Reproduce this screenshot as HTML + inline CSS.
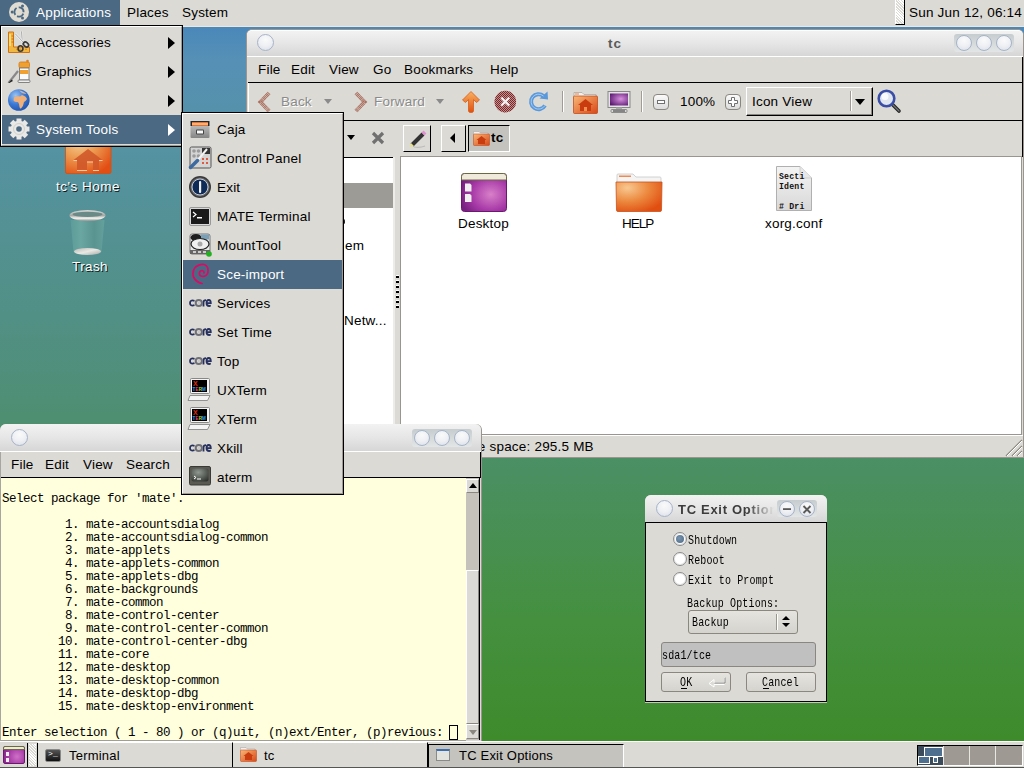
<!DOCTYPE html>
<html><head><meta charset="utf-8">
<style>
*{margin:0;padding:0;box-sizing:border-box}
html,body{width:1024px;height:768px;overflow:hidden}
body{position:relative;font-family:"Liberation Sans",sans-serif;font-size:13.5px;letter-spacing:0.2px;color:#000;
background:linear-gradient(to bottom,#4a88ba 27px,#5690b6 60px,#5592a2 150px,#4f8f76 400px,#4a8f62 470px,#44903f 620px,#3e8b2c 740px,#3e8b2c 768px)}
.a{position:absolute}
.t{position:absolute;white-space:nowrap;line-height:1}
.bg{background:#dcdad5}
.dlgt{font-family:"Liberation Mono",monospace;font-size:13.5px;transform:scaleX(0.741);transform-origin:0 0;color:#000}
.mono{font-family:"Liberation Mono",monospace}
/* window frame */
.tb{background:linear-gradient(to bottom,#f2f2f2 0%,#e6e6e6 50%,#d6d6d6 100%)}
.circ{position:absolute;width:16px;height:16px;border-radius:50%;border:1.5px solid #a7b4c8;
background:radial-gradient(circle at 50% 30%,#fafafa 0%,#eef0f4 50%,#d9dde6 100%)}
.circ.big{width:17px;height:17px}
.grp{position:absolute;background:linear-gradient(to bottom,#c6cdcf,#e3e6e6);border-radius:3px}
</style></head><body>

<!-- ========== TOP PANEL ========== -->
<div class="a bg" style="left:0;top:0;width:1024px;height:27px;border-bottom:1px solid #ebe7df"></div>
<div class="a" style="left:0;top:0;width:120px;height:25px;background:#4b6983"></div>
<svg class="a" style="left:8px;top:1px" width="22" height="22" viewBox="0 0 22 22">
<circle cx="11" cy="11" r="10" fill="#e0dcd2"/>
<circle cx="11" cy="11" r="4.6" fill="none" stroke="#4b6983" stroke-width="1.8" stroke-dasharray="7.5 2.1" transform="rotate(20 11 11)"/>
<circle cx="14.5" cy="5" r="1.5" fill="#4b6983"/><circle cx="4.2" cy="11" r="1.5" fill="#4b6983"/><circle cx="14.5" cy="17" r="1.5" fill="#4b6983"/>
</svg>
<div class="t" style="left:36px;top:6px;color:#fff">Applications</div>
<div class="t" style="left:127px;top:6px">Places</div>
<div class="t" style="left:182px;top:6px">System</div>
<div class="a" style="left:895px;top:0;width:10px;height:25px;border-right:1px solid #000;border-bottom:1px solid #000;border-left:1px solid #fff;background:repeating-linear-gradient(45deg,#dcdad5 0 1px,#fff 1px 2px)"></div>
<div class="t" style="left:909px;top:6px">Sun Jun 12, 06:14</div>



<!-- ========== DESKTOP ICONS ========== -->
<svg class="a" style="left:64px;top:130px" width="48" height="46" viewBox="0 0 48 46">
<defs><radialGradient id="hg" cx="0.3" cy="0.25" r="0.85"><stop offset="0" stop-color="#f4cc90"/><stop offset="0.45" stop-color="#ec9a50"/><stop offset="1" stop-color="#e24e14"/></radialGradient></defs>
<rect x="1.5" y="2" width="45.5" height="41.5" rx="1.5" fill="url(#hg)" stroke="#d05010" stroke-width="0.8"/>
<path d="M24 19 L38.5 30 H35 V40 H29 V31.5 H23 V40 H13 V30 H9.5 Z" fill="#d0582a" opacity="0.9"/>
<path d="M9.5 30.5 H13 M35 30.5 H38.5 M13 40.5 H23 M29 40.5 H35 M23 32 H29" stroke="#f8c8a0" stroke-width="1"/>
</svg>
<div class="t" style="left:56px;top:180px;letter-spacing:0.5px;color:#fff;text-shadow:1px 1px 0 rgba(0,0,0,0.85)">tc's Home</div>
<svg class="a" style="left:66px;top:207px" width="44" height="50" viewBox="0 0 44 50">
<defs><linearGradient id="tg" x1="0" y1="0" x2="1" y2="0"><stop offset="0" stop-color="#5c9c98"/><stop offset="0.3" stop-color="#6aa6a2"/><stop offset="0.7" stop-color="#5a9490"/><stop offset="1" stop-color="#64a09c"/></linearGradient>
<linearGradient id="rim" x1="0" y1="0" x2="0" y2="1"><stop offset="0" stop-color="#d8d8d4"/><stop offset="0.5" stop-color="#a8a8a4"/><stop offset="0.75" stop-color="#f4f4f0"/><stop offset="1" stop-color="#909090"/></linearGradient>
<linearGradient id="bt" x1="0" y1="0" x2="1" y2="1"><stop offset="0" stop-color="#b8b8b4"/><stop offset="0.5" stop-color="#e8e8e4"/><stop offset="1" stop-color="#a8a8a4"/></linearGradient></defs>
<path d="M4.5 13 L7.5 45 H35.5 L38.5 13 Z" fill="url(#tg)"/>
<ellipse cx="21.5" cy="44.5" rx="13.5" ry="3.5" fill="url(#bt)"/>
<ellipse cx="21.5" cy="8.5" rx="18" ry="5.5" fill="url(#rim)"/>
<ellipse cx="21.5" cy="7.3" rx="15" ry="2.6" fill="#6a8a88"/>
</svg>
<div class="t" style="left:72px;top:260px;letter-spacing:0.4px;color:#fff;text-shadow:1px 1px 0 rgba(0,0,0,0.85)">Trash</div>

<!-- ========== FILE MANAGER WINDOW ========== -->
<div class="a" style="left:246px;top:29px;width:778px;height:429px;background:#dcdad5;border-radius:6px 6px 0 0;border:1px solid #9a958e"></div>
<div class="a tb" style="left:247px;top:30px;width:776px;height:26px;border-radius:5px 5px 0 0;border-top:1px solid #fff"></div>
<div class="a" style="left:247px;top:56px;width:776px;height:1px;background:#fff"></div>
<div class="circ big" style="left:257px;top:34px"></div>
<div class="t" style="left:608px;top:37px;font-weight:bold;color:#5a5a5a;font-size:13.5px;letter-spacing:1px">tc</div>
<div class="grp" style="left:954px;top:34px;width:60px;height:18px"></div>
<div class="circ" style="left:956px;top:35px"></div>
<div class="circ" style="left:976px;top:35px"></div>
<div class="circ" style="left:996px;top:35px"></div>
<!-- menubar -->
<div class="a" style="left:248px;top:57px;width:775px;height:26px;background:#dcdad5;border-bottom:1px solid #000;border-right:1px solid #000"></div>
<div class="t" style="left:258px;top:63px">File</div>
<div class="t" style="left:291px;top:63px">Edit</div>
<div class="t" style="left:329px;top:63px">View</div>
<div class="t" style="left:373px;top:63px">Go</div>
<div class="t" style="left:404px;top:63px">Bookmarks</div>
<div class="t" style="left:490px;top:63px">Help</div>
<!-- toolbar -->
<div class="a" style="left:248px;top:83px;width:775px;height:38px;background:#dcdad5;border-bottom:1px solid #000;border-right:1px solid #000;border-left:1px solid #fff"></div>

<!-- back -->
<svg class="a" style="left:257px;top:91px" width="15" height="22" viewBox="0 0 15 22">
<path d="M12 2 L3.5 11 L12 20" fill="none" stroke="#a05a48" stroke-width="4" stroke-dasharray="1 0.5" opacity="0.85"/>
</svg>
<div class="t" style="left:281px;top:95px;color:#8a8a8a;text-shadow:1px 1px 0 #fff">Back</div>
<div class="a" style="left:324px;top:99px;border-left:4.5px solid transparent;border-right:4.5px solid transparent;border-top:5px solid #8a8a8a"></div>
<svg class="a" style="left:353px;top:91px" width="15" height="22" viewBox="0 0 15 22">
<path d="M3 2 L11.5 11 L3 20" fill="none" stroke="#a05a48" stroke-width="4" stroke-dasharray="1 0.5" opacity="0.85"/>
</svg>
<div class="t" style="left:374px;top:95px;color:#8a8a8a;text-shadow:1px 1px 0 #fff">Forward</div>
<div class="a" style="left:436px;top:99px;border-left:4.5px solid transparent;border-right:4.5px solid transparent;border-top:5px solid #8a8a8a"></div>
<!-- up -->
<svg class="a" style="left:461px;top:90px" width="20" height="24" viewBox="0 0 20 24">
<defs><linearGradient id="up" x1="0" y1="0" x2="0" y2="1"><stop offset="0" stop-color="#f8b060"/><stop offset="1" stop-color="#e05010"/></linearGradient></defs>
<path d="M10 1.5 L18.5 10 L15.5 12.5 L12.5 9.5 V21 Q12.5 22.5 10 22.5 Q7.5 22.5 7.5 21 V9.5 L4.5 12.5 L1.5 10 Z" fill="url(#up)" stroke="#d85a18" stroke-width="0.8" stroke-linejoin="round"/>
</svg>
<!-- stop -->
<svg class="a" style="left:494px;top:90px" width="23" height="24" viewBox="0 0 23 24">
<defs><pattern id="dith" width="2" height="2" patternUnits="userSpaceOnUse"><rect width="2" height="2" fill="#d8c8c4"/><rect width="1" height="1" fill="#7a1e22"/><rect x="1" y="1" width="1" height="1" fill="#7a1e22"/></pattern></defs>
<circle cx="11.3" cy="11.6" r="10.8" fill="url(#dith)"/>
<circle cx="11.3" cy="11.6" r="10.8" fill="#8a3030" opacity="0.35"/>
<path d="M7.3 7.6 L15.3 15.6 M15.3 7.6 L7.3 15.6" stroke="#f0f0f0" stroke-width="2.2"/>
</svg>
<!-- reload -->
<svg class="a" style="left:528px;top:90px" width="22" height="24" viewBox="0 0 22 24">
<path d="M17 15.5 A7.5 7.5 0 1 1 15.5 6" fill="none" stroke="#5a98dc" stroke-width="4"/>
<path d="M11.5 8.5 L20 9.5 L19.5 1.5 Z" fill="#5a98dc"/>
<path d="M17 15.5 A7.5 7.5 0 1 1 15.5 6" fill="none" stroke="#a8ccf0" stroke-width="1"/>
</svg>
<!-- separator -->
<div class="a" style="left:562px;top:91px;width:2px;height:21px;border-left:1px solid #a09c94;border-right:1px solid #fff"></div>
<!-- home -->
<svg class="a" style="left:573px;top:91px" width="25" height="23" viewBox="0 0 25 23">
<defs><linearGradient id="hf" x1="0" y1="0" x2="1" y2="1"><stop offset="0" stop-color="#f8b878"/><stop offset="1" stop-color="#d84818"/></linearGradient></defs>
<path d="M1 1.5 H9 L11 3.5 H23 V8 H1 Z" fill="#f4f0ec" stroke="#aaa" stroke-width="0.8"/>
<rect x="2" y="2.5" width="4" height="1" fill="#f08040"/>
<rect x="0.5" y="5" width="24" height="17.5" rx="1" fill="url(#hf)" stroke="#c04010" stroke-width="0.7"/>
<path d="M12.5 8 L20 14 H18 V20 H7 V14 H5 Z" fill="#c83c10"/>
<rect x="11" y="16" width="3" height="4" fill="#f09050"/>
</svg>
<!-- computer -->
<svg class="a" style="left:607px;top:90px" width="24" height="24" viewBox="0 0 24 24">
<defs><radialGradient id="cm" cx="0.6" cy="0.45" r="0.7"><stop offset="0" stop-color="#d890e0"/><stop offset="1" stop-color="#5a1870"/></radialGradient></defs>
<rect x="1" y="1.5" width="22" height="16" fill="#e4e4e4" stroke="#888" stroke-width="1"/>
<rect x="3" y="3.5" width="18" height="12" fill="url(#cm)"/>
<rect x="9" y="17.5" width="6" height="2" fill="#aaa"/>
<rect x="4" y="19.5" width="16" height="3" rx="1" fill="#d8d8d8" stroke="#777" stroke-width="0.8"/>
<rect x="6" y="20.5" width="12" height="1" fill="#333"/>
</svg>
<div class="a" style="left:641px;top:91px;width:2px;height:21px;border-left:1px solid #a09c94;border-right:1px solid #fff"></div>
<!-- zoom out / in -->
<div class="a" style="left:653px;top:94px;width:16px;height:16px;border-radius:4px;border:1px solid #8a8680;background:linear-gradient(#fafafa,#dcdcdc)"></div>
<div class="a" style="left:657px;top:100px;width:8px;height:4px;border:1px solid #707070;background:#fff"></div>
<div class="t" style="left:680px;top:95px">100%</div>
<div class="a" style="left:725px;top:94px;width:16px;height:16px;border-radius:4px;border:1px solid #8a8680;background:linear-gradient(#fafafa,#dcdcdc)"></div>
<svg class="a" style="left:727px;top:96px" width="12" height="12" viewBox="0 0 12 12"><path d="M4.5 1.5 H7.5 V4.5 H10.5 V7.5 H7.5 V10.5 H4.5 V7.5 H1.5 V4.5 H4.5 Z" fill="#fff" stroke="#707070" stroke-width="1"/></svg>
<!-- icon view combo -->
<div class="a" style="left:746px;top:87px;width:127px;height:29px;border-top:1px solid #fff;border-left:1px solid #fff;border-right:1px solid #000;border-bottom:1px solid #000;box-shadow:inset -1px -1px 0 #8a8680;background:#dcdad5"></div>
<div class="t" style="left:752px;top:95px">Icon View</div>
<div class="a" style="left:850px;top:91px;width:2px;height:20px;border-left:1px solid #a09c94;border-right:1px solid #fff"></div>
<div class="a" style="left:855px;top:99px;border-left:5.5px solid transparent;border-right:5.5px solid transparent;border-top:6px solid #000"></div>
<!-- search -->
<svg class="a" style="left:877px;top:89px" width="26" height="25" viewBox="0 0 26 25">
<path d="M14 14 L22 22" stroke="#222" stroke-width="3.6" stroke-linecap="round"/>
<path d="M14 14 L22 22" stroke="#777" stroke-width="1.2" stroke-linecap="round"/>
<circle cx="9.5" cy="9.5" r="7.8" fill="#dfe6f0" stroke="#3a4ea8" stroke-width="2.6"/>
<circle cx="8" cy="7.5" r="3.5" fill="#fff" opacity="0.8"/>
</svg>

<!-- location bar -->
<div class="a" style="left:248px;top:121px;width:775px;height:36px;background:#dcdad5;border-right:1px solid #000"></div>

<div class="a" style="left:347px;top:135px;border-left:4.5px solid transparent;border-right:4.5px solid transparent;border-top:5px solid #000"></div>
<svg class="a" style="left:371px;top:131px" width="14" height="14" viewBox="0 0 14 14"><path d="M2 2 L12 12 M12 2 L2 12" stroke="#707070" stroke-width="3.2"/></svg>
<!-- pencil button -->
<div class="a" style="left:403px;top:125px;width:28px;height:27px;border-top:1px solid #fff;border-left:1px solid #fff;border-right:1px solid #000;border-bottom:1px solid #000;background:#dcdad5"></div>
<svg class="a" style="left:408px;top:129px" width="20" height="20" viewBox="0 0 20 20">
<path d="M4 16 L15 5" stroke="#333" stroke-width="4"/>
<path d="M15 5 L17 3" stroke="#e090d0" stroke-width="4"/>
<path d="M2 18 L3 14 L6 17 Z" fill="#e8e080"/>
<path d="M6 18 Q12 19 17 17" stroke="#bbb" stroke-width="1.2" fill="none"/>
</svg>
<!-- left arrow button -->
<div class="a" style="left:441px;top:125px;width:25px;height:27px;border-top:1px solid #fff;border-left:1px solid #fff;border-right:1px solid #000;border-bottom:1px solid #000;background:#dcdad5"></div>
<div class="a" style="left:450px;top:133px;border-top:5.5px solid transparent;border-bottom:5.5px solid transparent;border-right:5px solid #000"></div>
<!-- tc pressed button -->
<div class="a" style="left:468px;top:125px;width:42px;height:27px;border-top:1px solid #000;border-left:1px solid #000;border-right:1px solid #fff;border-bottom:1px solid #fff;background:#c5c3be"></div>
<svg class="a" style="left:473px;top:131px" width="17" height="15" viewBox="0 0 17 15">
<path d="M0.5 0.5 H6 L7.5 2 H15 V5 H0.5 Z" fill="#f4f0ec" stroke="#aaa" stroke-width="0.6"/>
<rect x="0.5" y="3" width="16" height="11.5" rx="0.8" fill="url(#hf)" stroke="#c04010" stroke-width="0.5"/>
<path d="M8.5 5 L13.5 9 H12 V13 H5 V9 H3.5 Z" fill="#c83c10"/>
</svg>
<div class="t" style="left:491px;top:131px;font-weight:bold">tc</div>

<!-- sidebar -->
<div class="a" style="left:248px;top:157px;width:145px;height:278px;background:#fff;border-top:1px solid #000"></div>
<div class="a" style="left:248px;top:183px;width:145px;height:25px;background:#9d9b96"></div>
<div class="t" style="left:345px;top:239px">em</div>
<div class="t" style="left:344px;top:314px">Netw...</div>
<div class="a" style="left:342px;top:219px;width:3px;height:5px;border-radius:2px;background:#222"></div>
<!-- pane separator -->
<div class="a" style="left:393px;top:157px;width:7px;height:278px;background:#dcdad5;border-left:2px solid #eeece8"></div>
<div class="a" style="left:396px;top:275px;width:3px;height:34px;background:repeating-linear-gradient(to bottom,#fff 0 1px,#000 1px 3px,transparent 3px 5px)"></div>
<!-- icon view -->
<div class="a" style="left:400px;top:156px;width:622px;height:279px;background:#fff;border:1px solid #9a958e"></div>

<!-- Desktop folder icon -->
<svg class="a" style="left:460px;top:172px" width="48" height="42" viewBox="0 0 48 42">
<defs><radialGradient id="dp" cx="0.65" cy="0.55" r="0.7"><stop offset="0" stop-color="#d880c8"/><stop offset="0.6" stop-color="#a83aa8"/><stop offset="1" stop-color="#762080"/></radialGradient></defs>
<rect x="1.5" y="1.5" width="45" height="38" rx="3" fill="url(#dp)" stroke="#6a1870" stroke-width="1"/>
<path d="M1.5 8 V4.5 Q1.5 1.5 4.5 1.5 H43.5 Q46.5 1.5 46.5 4.5 V8 Z" fill="#efeadb" stroke="#6b6b40" stroke-width="1"/>
<path d="M5 11.5 H10 L11.5 13 V19.5 H5 Z M5 22 H10 L11.5 23.5 V30 H5 Z" fill="#f0f0f0"/>
</svg>
<div class="t" style="left:458px;top:217px">Desktop</div>
<!-- HELP folder -->
<svg class="a" style="left:615px;top:173px" width="48" height="40" viewBox="0 0 48 40">
<defs><radialGradient id="hp" cx="0.25" cy="0.2" r="0.9"><stop offset="0" stop-color="#f8c890"/><stop offset="0.5" stop-color="#ec8a40"/><stop offset="1" stop-color="#e04e10"/></radialGradient></defs>
<path d="M2 8 V2 Q2 1 3 1 H18 L21 4 H45 Q46 4 46 5 V10 H2 Z" fill="#f4f4f4" stroke="#c8c8c8" stroke-width="0.8"/>
<rect x="4" y="2.5" width="12" height="1.5" fill="#f08850"/>
<path d="M1 9 H47 L46.5 37 Q46.5 38.5 45 38.5 H3 Q1.5 38.5 1.5 37 Z" fill="url(#hp)" stroke="#c85020" stroke-width="0.8"/>
</svg>
<div class="t" style="left:622px;top:217px;letter-spacing:-1px">HELP</div>
<!-- xorg.conf -->
<svg class="a" style="left:776px;top:166px" width="37" height="46" viewBox="0 0 37 46">
<defs><linearGradient id="pg" x1="0" y1="0" x2="0" y2="1"><stop offset="0" stop-color="#f4f4f4"/><stop offset="1" stop-color="#d8d8d8"/></linearGradient></defs>
<path d="M0.5 0.5 H24 L35.5 12 V44.5 H0.5 Z" fill="url(#pg)" stroke="#b0b0b0" stroke-width="1"/>
<path d="M24 0.5 V12 H35.5" fill="#e8e8e8" stroke="#c8c8c8" stroke-width="0.8"/>
<g font-family="Liberation Mono" font-weight="bold" font-size="8.2" fill="#111">
<text x="3" y="13">Secti</text><text x="3" y="23">Ident</text><text x="3" y="43"># Dri</text></g>
</svg>
<div class="t" style="left:765px;top:217px">xorg.conf</div>

<!-- status bar -->
<div class="a" style="left:248px;top:435px;width:775px;height:23px;background:#dcdad5;border-top:1px solid #fff;border-bottom:1px solid #9a958e"></div>
<div class="t" style="left:457px;top:440px">Free space: 295.5 MB</div>
<svg class="a" style="left:1004px;top:438px" width="19" height="19"><g stroke="#8e8a82" stroke-width="1.3"><line x1="2" y1="18" x2="18" y2="2"/><line x1="8" y1="18" x2="18" y2="8"/><line x1="13" y1="18" x2="18" y2="13"/></g><g stroke="#fff" stroke-width="1"><line x1="3" y1="18" x2="18" y2="3"/><line x1="9" y1="18" x2="18" y2="9"/><line x1="14" y1="18" x2="18" y2="14"/></g></svg>


<!-- ========== TERMINAL WINDOW ========== -->
<div class="a" style="left:0;top:424px;width:482px;height:317px;background:#dcdad5;border-radius:6px 6px 0 0;border-right:1px solid #9a958e;border-left:1px solid #a8a6a0"></div>
<div class="a tb" style="left:0;top:424px;width:481px;height:27px;border-radius:6px 6px 0 0"></div>
<div class="a" style="left:0;top:451px;width:481px;height:1px;background:#fff"></div>
<div class="circ big" style="left:11px;top:429px"></div>
<div class="grp" style="left:412px;top:429px;width:60px;height:18px"></div>
<div class="circ" style="left:414px;top:430px"></div>
<div class="circ" style="left:434px;top:430px"></div>
<div class="circ" style="left:454px;top:430px"></div>
<div class="a" style="left:1px;top:452px;width:480px;height:26px;background:#dcdad5;border-bottom:1px solid #000;border-right:1px solid #000"></div>
<div class="t" style="left:11px;top:458px">File</div>
<div class="t" style="left:45px;top:458px">Edit</div>
<div class="t" style="left:83px;top:458px">View</div>
<div class="t" style="left:126px;top:458px">Search</div>
<div class="a" style="left:1px;top:478px;width:465px;height:263px;background:#ffffdd;border-bottom:1px solid #a09e98"></div>
<pre class="a mono" style="left:2px;top:493px;font-size:12.5px;letter-spacing:-0.5px;line-height:13px;color:#000">Select package for 'mate'.

         1. mate-accountsdialog
         2. mate-accountsdialog-common
         3. mate-applets
         4. mate-applets-common
         5. mate-applets-dbg
         6. mate-backgrounds
         7. mate-common
         8. mate-control-center
         9. mate-control-center-common
        10. mate-control-center-dbg
        11. mate-core
        12. mate-desktop
        13. mate-desktop-common
        14. mate-desktop-dbg
        15. mate-desktop-environment

Enter selection ( 1 - 80 ) or (q)uit, (n)ext/Enter, (p)revious: </pre>
<div class="a" style="left:449px;top:725px;width:9px;height:15px;border:1px solid #000"></div>
<!-- scrollbar -->
<div class="a" style="left:466px;top:478px;width:14px;height:262px;background:#c5c2bc;border-right:1px solid #000"></div>
<div class="a" style="left:466px;top:479px;width:13px;height:14px;background:#dcdad5;border-top:1px solid #fff;border-left:1px solid #fff;border-bottom:1px solid #8a8680;border-right:1px solid #8a8680"></div>
<div class="a" style="left:469px;top:483px;width:0;height:0;border-left:4px solid transparent;border-right:4px solid transparent;border-bottom:5px solid #000"></div>
<div class="a" style="left:466px;top:570px;width:13px;height:154px;background:#dcdad5;border-top:1px solid #fff;border-left:1px solid #fff;border-bottom:1px solid #8a8680;border-right:1px solid #8a8680"></div>
<div class="a" style="left:466px;top:724px;width:13px;height:15px;background:#dcdad5;border-top:1px solid #fff;border-left:1px solid #fff;border-bottom:1px solid #8a8680;border-right:1px solid #8a8680"></div>
<div class="a" style="left:469px;top:730px;width:0;height:0;border-left:4px solid transparent;border-right:4px solid transparent;border-top:5px solid #8a8680"></div>


<!-- ========== TC EXIT DIALOG ========== -->
<div class="a" style="left:645px;top:495px;width:182px;height:208px;background:#dcdad5;border-radius:6px 6px 0 0;border:1px solid #c8c5bf;border-top:none"></div>
<div class="a tb" style="left:645px;top:495px;width:182px;height:27px;border-radius:6px 6px 0 0"></div>
<div class="circ big" style="left:656px;top:500px"></div>
<div class="t" style="left:678px;top:503px;font-weight:bold;color:#3c3c3c;font-size:13px;letter-spacing:0.7px;width:96px;overflow:hidden;-webkit-mask-image:linear-gradient(to right,#000 72%,transparent 100%)">TC Exit Options</div>
<div class="grp" style="left:777px;top:500px;width:40px;height:17px"></div>
<div class="circ" style="left:779px;top:501px"></div>
<div class="circ" style="left:799px;top:501px"></div>
<svg class="a" style="left:779px;top:501px" width="36" height="16" viewBox="0 0 36 16"><rect x="4" y="7.2" width="8" height="1.8" fill="#5a5a5a"/><path d="M24.5 5 L31.5 12 M31.5 5 L24.5 12" stroke="#5a5a5a" stroke-width="1.9"/></svg>
<div class="a" style="left:645px;top:522px;width:182px;height:180px;border:1px solid #000;background:#dcdad5"></div>
<div class="dlgt t" style="left:688px;top:534px">Shutdown</div>
<div class="dlgt t" style="left:688px;top:554px">Reboot</div>
<div class="dlgt t" style="left:688px;top:574px">Exit to Prompt</div>
<div class="dlgt t" style="left:687px;top:597px">Backup Options:</div>
<div class="a" style="left:688px;top:610px;width:110px;height:24px;border:1px solid #8a8680;border-radius:3px;background:linear-gradient(#e6e4df,#d5d3ce)"></div>
<div class="dlgt t" style="left:692px;top:616px">Backup</div>
<div class="a" style="left:661px;top:642px;width:155px;height:25px;border:1px solid #8a8680;border-radius:3px;background:#c0c0c0"></div>
<div class="dlgt t" style="left:662px;top:649px">sda1/tce</div>
<div class="a" style="left:661px;top:672px;width:70px;height:20px;border:1px solid #8a8680;border-radius:3px;background:linear-gradient(#e6e4df,#d5d3ce)"></div>
<div class="dlgt t" style="left:680px;top:676px">OK</div>
<div class="a" style="left:746px;top:672px;width:70px;height:20px;border:1px solid #8a8680;border-radius:3px;background:linear-gradient(#e6e4df,#d5d3ce)"></div>
<div class="dlgt t" style="left:762px;top:676px">Cancel</div>


<div class="a" style="left:673px;top:532px;width:14px;height:14px;border-radius:50%;border:1px solid #8a8a8a;background:#fff;box-shadow:inset 0 0 0 1px #e0e0e0"></div>
<div class="a" style="left:676px;top:535px;width:8px;height:8px;border-radius:50%;background:radial-gradient(circle at 40% 40%,#7a94b0,#4b6983)"></div>
<div class="a" style="left:673px;top:552px;width:14px;height:14px;border-radius:50%;border:1px solid #8a8a8a;background:#fff;box-shadow:inset 0 0 0 1px #e8e8e8"></div>
<div class="a" style="left:673px;top:572px;width:14px;height:14px;border-radius:50%;border:1px solid #8a8a8a;background:#fff;box-shadow:inset 0 0 0 1px #e8e8e8"></div>
<div class="a" style="left:776px;top:614px;width:1px;height:16px;background:#9a968e;box-shadow:1px 0 0 #fff"></div>
<div class="a" style="left:782px;top:616px;border-left:4.5px solid transparent;border-right:4.5px solid transparent;border-bottom:4px solid #000"></div>
<div class="a" style="left:782px;top:623px;border-left:4.5px solid transparent;border-right:4.5px solid transparent;border-top:4px solid #000"></div>
<svg class="a" style="left:708px;top:676px" width="18" height="12" viewBox="0 0 18 12"><path d="M16.5 1 V6.5 H6 V3.5 L1 7.5 L6 11 V8.5 H16.5" fill="none" stroke="#fff" stroke-width="1"/><path d="M17 1.5 V7 H6.5" fill="none" stroke="#8a8a8a" stroke-width="1"/></svg>
<div class="a" style="left:681px;top:688px;width:6px;height:1px;background:#000"></div>
<div class="a" style="left:763px;top:688px;width:6px;height:1px;background:#000"></div>

<!-- ========== TASKBAR ========== -->
<div class="a bg" style="left:0;top:741px;width:1024px;height:27px;border-top:1px solid #fff;border-bottom:1px solid #555"></div>

<div class="a" style="left:3px;top:746px;width:22px;height:18px;border-radius:2px;background:radial-gradient(circle at 65% 60%,#d070c8,#a035a0 60%,#7a2080);border:1px solid #6a1870"></div>
<div class="a" style="left:3px;top:746px;width:22px;height:4px;background:#efeadb;border:1px solid #6b6b40;border-radius:2px 2px 0 0"></div>
<div class="a" style="left:6px;top:752px;width:3px;height:4px;background:#eee"></div>
<div class="a" style="left:6px;top:758px;width:3px;height:4px;background:#eee"></div>
<div class="a" style="left:27px;top:743px;width:1px;height:24px;background:#000"></div>
<div class="a" style="left:29px;top:744px;width:7px;height:22px;background:repeating-linear-gradient(45deg,#dcdad5 0 1px,#fff 1px 2px)"></div>
<div class="a" style="left:37px;top:743px;width:1px;height:24px;background:#000"></div>
<!-- Terminal button -->
<div class="a" style="left:38px;top:742px;width:195px;height:25px;border-top:1px solid #fff;border-right:1px solid #000"></div>
<div class="a" style="left:45px;top:749px;width:16px;height:13px;background:linear-gradient(#555,#111);border:1px solid #888;border-radius:2px"></div>
<div class="t" style="left:48px;top:750px;color:#fff;font-size:8px;font-family:'Liberation Mono'">&gt;_</div>
<div class="t" style="left:69px;top:749px;font-size:13px">Terminal</div>
<!-- tc button -->
<div class="a" style="left:233px;top:742px;width:195px;height:25px;border-top:1px solid #fff;border-right:1px solid #000"></div>
<svg class="a" style="left:240px;top:747px" width="17" height="15" viewBox="0 0 17 15">
<path d="M0.5 0.5 H6 L7.5 2 H15 V5 H0.5 Z" fill="#f4f0ec" stroke="#aaa" stroke-width="0.6"/>
<rect x="0.5" y="3" width="16" height="11.5" rx="0.8" fill="url(#hf)" stroke="#c04010" stroke-width="0.5"/>
<path d="M8.5 5 L13.5 9 H12 V13 H5 V9 H3.5 Z" fill="#c83c10"/>
</svg>
<div class="t" style="left:264px;top:749px;font-size:13px">tc</div>
<!-- TC Exit Options button (pressed) -->
<div class="a" style="left:428px;top:744px;width:196px;height:23px;background:#c5c3bd;border-top:1px solid #000;border-left:1px solid #000;border-right:1px solid #fff"></div>
<div class="a" style="left:436px;top:749px;width:14px;height:12px;background:#e2e4e0;border:1px solid #8a8a8a;border-top:2px solid #3d6fb0"></div>
<div class="t" style="left:459px;top:749px;font-size:13px">TC Exit Options</div>
<!-- pager -->
<div class="a" style="left:917px;top:745px;width:106px;height:21px;background:#e8e6e1;border-top:1px solid #000;border-left:1px solid #000;border-right:1px solid #fff;border-bottom:1px solid #fff"></div>
<div class="a" style="left:918px;top:746px;width:25px;height:19px;background:#3c4b5a"></div>
<div class="a" style="left:944px;top:746px;width:25px;height:19px;background:#9e9a93"></div>
<div class="a" style="left:970px;top:746px;width:25px;height:19px;background:#9e9a93"></div>
<div class="a" style="left:996px;top:746px;width:26px;height:19px;background:#9e9a93"></div>
<div class="a" style="left:924px;top:747px;width:19px;height:10px;background:#4e6f8e;border:1px solid #fff"></div>
<div class="a" style="left:918px;top:756px;width:12px;height:8px;background:#4e6f8e;border:1px solid #fff"></div>
<div class="a" style="left:933px;top:757px;width:5px;height:6px;background:#4e6f8e;border:1px solid #fff"></div>



<!-- ========== APPLICATIONS MENU ========== -->
<div class="a" style="left:0;top:25px;width:183px;height:122px;background:#dcdad5;border:1px solid #000"></div>
<div class="a" style="left:1px;top:26px;width:181px;height:120px;border-top:1px solid #fff;border-left:1px solid #fff;border-right:1px solid #a09c94;border-bottom:1px solid #a09c94"></div>
<div class="a" style="left:2px;top:115px;width:179px;height:29px;background:#4b6983"></div>
<svg class="a" style="left:7px;top:30px" width="24" height="24" viewBox="0 0 24 24">
<path d="M1.5 2 H6.5 V17 H22.5 V22.5 H1.5 Z" fill="#f0b840" stroke="#d07010" stroke-width="1"/>
<path d="M3 4 V16" stroke="#fce890" stroke-width="1.5"/>
<path d="M4.5 6H6.5 M4.5 9H6.5 M4.5 12H6.5 M10 18.5V20 M13 18.5V20 M16 18.5V20 M19 18.5V20" stroke="#c06010" stroke-width="0.8"/>
<path d="M14.5 1.5 L15.5 15" stroke="#f4f4f4" stroke-width="2"/><path d="M14.5 1.5 L15.5 15" stroke="#777" stroke-width="0.6"/>
<path d="M8.5 4 L17 13" stroke="#f4f4f4" stroke-width="2"/><path d="M8.5 4 L17 13" stroke="#777" stroke-width="0.6"/>
<ellipse cx="13.5" cy="18.5" rx="2.4" ry="2.8" fill="none" stroke="#3a3a3a" stroke-width="1.6"/>
<ellipse cx="19" cy="14.5" rx="2.9" ry="2" fill="none" stroke="#3a3a3a" stroke-width="1.6" transform="rotate(40 19 14.5)"/>
</svg>
<svg class="a" style="left:7px;top:59px" width="24" height="24" viewBox="0 0 24 24">
<path d="M1.5 24 L11 12" stroke="#888" stroke-width="2.2"/>
<path d="M1 24.5 L4.5 20.5 L6 22 Z" fill="#222"/>
<rect x="12" y="3" width="10.5" height="6" rx="1.5" fill="#f0a030" stroke="#d07818" stroke-width="0.8"/>
<rect x="12.5" y="9" width="9.5" height="12" fill="#fafafa" stroke="#777" stroke-width="0.9"/>
<rect x="13" y="11" width="8.5" height="4" fill="#f0a030"/>
<rect x="11" y="21" width="12" height="2.5" rx="1" fill="#eee" stroke="#777" stroke-width="0.9"/>
<circle cx="20.5" cy="2" r="1.3" fill="#e08020"/>
</svg>
<svg class="a" style="left:7px;top:88px" width="24" height="24" viewBox="0 0 24 24">
<defs><radialGradient id="gl" cx="0.35" cy="0.3" r="0.8"><stop offset="0" stop-color="#9cc4f0"/><stop offset="0.5" stop-color="#3c7ad6"/><stop offset="1" stop-color="#1c4ea8"/></radialGradient></defs>
<circle cx="11.8" cy="12" r="10.8" fill="url(#gl)"/>
<path d="M7 9.5 Q10 7.5 13 8.5 L15 7 Q19 8 20 11 Q19 13 17 14 Q16.5 18 14 20.5 Q13 21 12.5 19 Q12.5 16 11 14 Q8 14.5 6.5 12.5 Z" fill="#f0b078"/>
<path d="M12 2.5 Q17 3 19.5 6 Q17 6 15 5 Z" fill="#f0c098" opacity="0.8"/>
</svg>
<svg class="a" style="left:7px;top:117px" width="24" height="24" viewBox="0 0 24 24">
<g fill="#e8e8e6">
<circle cx="12" cy="12" r="8.3"/>
<rect x="9.5" y="1.5" width="5" height="21"/><rect x="1.5" y="9.5" width="21" height="5"/>
<rect x="9.5" y="1.5" width="5" height="21" transform="rotate(45 12 12)"/><rect x="9.5" y="1.5" width="5" height="21" transform="rotate(-45 12 12)"/>
</g>
<circle cx="12" cy="12" r="5.5" fill="none" stroke="#d0d0ce" stroke-width="1"/>
<circle cx="12" cy="12" r="2.8" fill="#4b6983"/>
</svg>
<div class="t" style="left:36px;top:36px">Accessories</div>
<div class="t" style="left:36px;top:65px">Graphics</div>
<div class="t" style="left:36px;top:94px">Internet</div>
<div class="t" style="left:36px;top:123px;color:#fff">System Tools</div>
<div class="a" style="left:168px;top:37px;border-top:6px solid transparent;border-bottom:6px solid transparent;border-left:7px solid #000"></div>
<div class="a" style="left:168px;top:66px;border-top:6px solid transparent;border-bottom:6px solid transparent;border-left:7px solid #000"></div>
<div class="a" style="left:168px;top:95px;border-top:6px solid transparent;border-bottom:6px solid transparent;border-left:7px solid #000"></div>
<div class="a" style="left:168px;top:124px;border-top:6px solid transparent;border-bottom:6px solid transparent;border-left:7px solid #fff"></div>

<!-- ========== SYSTEM TOOLS SUBMENU ========== -->
<div class="a" style="left:181px;top:112px;width:163px;height:383px;background:#dcdad5;border:1px solid #000"></div>
<div class="a" style="left:182px;top:113px;width:161px;height:381px;border-top:1px solid #fff;border-left:1px solid #fff;border-right:1px solid #a09c94;border-bottom:1px solid #a09c94"></div>
<div class="a" style="left:183px;top:260px;width:159px;height:29px;background:#4b6983"></div>
<div id="subicons"></div>
<!-- caja -->
<svg class="a" style="left:189px;top:117px" width="22" height="22" viewBox="0 0 22 22">
<defs><linearGradient id="cj" x1="0" y1="0" x2="0" y2="1"><stop offset="0" stop-color="#b8b8b8"/><stop offset="1" stop-color="#858585"/></linearGradient></defs>
<rect x="1.5" y="1" width="19" height="3" rx="1" fill="#d8d8d8"/>
<rect x="1.5" y="4" width="19" height="5" fill="#262626"/>
<rect x="3" y="5" width="16" height="4" fill="#e8702a"/><rect x="3" y="6.5" width="16" height="1" fill="#fff3e0"/>
<rect x="1.5" y="9" width="19" height="12" rx="1" fill="url(#cj)"/>
<rect x="7" y="12.5" width="8" height="5" rx="1" fill="#444"/><rect x="8" y="13.5" width="6" height="3" fill="#fafafa"/>
</svg>
<!-- control panel -->
<svg class="a" style="left:188px;top:146px" width="24" height="24" viewBox="0 0 24 24">
<rect x="2" y="1" width="21" height="21" rx="1.5" fill="#d4d4d4" stroke="#555" stroke-width="1"/>
<g fill="#9a9a9a"><circle cx="6" cy="5" r="1.8"/><circle cx="10.5" cy="5" r="1.8"/><circle cx="6" cy="10" r="1.8"/><circle cx="10.5" cy="10" r="1.8"/></g>
<rect x="14" y="2" width="8" height="6" fill="#333"/>
<g fill="#e05a40"><rect x="14" y="12" width="2" height="2"/><rect x="18" y="12" width="2" height="2"/><rect x="14" y="16" width="2" height="2"/><rect x="18" y="16" width="2" height="2"/></g>
<path d="M19 3 L9 15" stroke="#f4f4f4" stroke-width="2"/>
<path d="M9.5 14.5 L2.5 21.5" stroke="#3c6aa0" stroke-width="3.5" stroke-linecap="round"/>
</svg>
<!-- exit -->
<svg class="a" style="left:188px;top:175px" width="24" height="24" viewBox="0 0 24 24">
<circle cx="12" cy="12" r="11" fill="#3a3a3a"/><circle cx="12" cy="12" r="9.5" fill="#6a6a6a"/>
<circle cx="12" cy="12" r="8" fill="#0e2a56" stroke="#c8ccd4" stroke-width="1"/>
<rect x="11" y="6" width="2.2" height="12" rx="1" fill="#f0f0f0"/>
</svg>
<!-- mate terminal -->
<svg class="a" style="left:189px;top:207px" width="22" height="20" viewBox="0 0 22 20">
<rect x="0.5" y="0.5" width="21" height="18" rx="1.5" fill="#d8d8d8" stroke="#999"/>
<rect x="2" y="2" width="18" height="15" fill="#1a1a1a"/>
<path d="M4 5 L7 7.5 L4 10" stroke="#fff" stroke-width="1.2" fill="none"/><rect x="8" y="10" width="5" height="1.5" fill="#fff"/>
</svg>
<!-- mounttool -->
<svg class="a" style="left:189px;top:233px" width="24" height="24" viewBox="0 0 24 24">
<rect x="1" y="1" width="20" height="20" rx="2" fill="#e8e8e8" stroke="#777" stroke-width="1"/>
<ellipse cx="7" cy="4.5" rx="5.5" ry="3.5" fill="#1e1e1e"/>
<rect x="12" y="1.5" width="8" height="5" fill="#7aa0b8"/>
<ellipse cx="11" cy="11" rx="9" ry="5.5" fill="#f0f0f0" stroke="#222" stroke-width="1.2"/>
<circle cx="11" cy="11" r="2.5" fill="#aaa"/>
<rect x="1" y="17" width="20" height="4" fill="#666"/><g fill="#ccc"><rect x="4" y="18" width="3" height="2"/><rect x="9" y="18" width="3" height="2"/><rect x="14" y="18" width="3" height="2"/></g>
<circle cx="20" cy="21" r="2.8" fill="#20b020"/>
</svg>
<!-- sce-import debian swirl -->
<svg class="a" style="left:191px;top:263px" width="20" height="22" viewBox="0 0 20 22">
<path d="M11 20.5 Q5 19 2.5 14 Q0.8 8 4.5 4 Q8.5 0.5 13 1.5 Q17.5 3 17 8.5 Q16.5 13 12 13.5 Q8.5 13.5 8.3 10.5 Q8.5 7.5 11.2 7.5 Q13.2 8 13 10" fill="none" stroke="#dc0a64" stroke-width="1.7" stroke-linecap="round"/>
</svg>
<svg class="a" style="left:188px;top:298px" width="24" height="10" viewBox="0 0 24 10">
<g fill="none" stroke="#26305e" stroke-width="1.8"><path d="M6.5 2.8 Q2 1.5 2 5 Q2 8.5 6.5 7.2"/><path d="M15.5 8.5 V4.5 Q15.5 2.2 18 2.2"/><path d="M18.8 5.2 H22.8 Q22.8 2 20.8 2 Q18.5 2 18.5 5 Q18.5 8 21.3 8 L22.8 7.5"/></g>
<circle cx="10.8" cy="5" r="3.1" fill="none" stroke="#707078" stroke-width="2"/><circle cx="10.8" cy="5" r="1.2" fill="#c8c8c8"/>
</svg><svg class="a" style="left:188px;top:327px" width="24" height="10" viewBox="0 0 24 10">
<g fill="none" stroke="#26305e" stroke-width="1.8"><path d="M6.5 2.8 Q2 1.5 2 5 Q2 8.5 6.5 7.2"/><path d="M15.5 8.5 V4.5 Q15.5 2.2 18 2.2"/><path d="M18.8 5.2 H22.8 Q22.8 2 20.8 2 Q18.5 2 18.5 5 Q18.5 8 21.3 8 L22.8 7.5"/></g>
<circle cx="10.8" cy="5" r="3.1" fill="none" stroke="#707078" stroke-width="2"/><circle cx="10.8" cy="5" r="1.2" fill="#c8c8c8"/>
</svg><svg class="a" style="left:188px;top:356px" width="24" height="10" viewBox="0 0 24 10">
<g fill="none" stroke="#26305e" stroke-width="1.8"><path d="M6.5 2.8 Q2 1.5 2 5 Q2 8.5 6.5 7.2"/><path d="M15.5 8.5 V4.5 Q15.5 2.2 18 2.2"/><path d="M18.8 5.2 H22.8 Q22.8 2 20.8 2 Q18.5 2 18.5 5 Q18.5 8 21.3 8 L22.8 7.5"/></g>
<circle cx="10.8" cy="5" r="3.1" fill="none" stroke="#707078" stroke-width="2"/><circle cx="10.8" cy="5" r="1.2" fill="#c8c8c8"/>
</svg><svg class="a" style="left:187px;top:377px" width="26" height="25" viewBox="0 0 26 25">
<rect x="3.5" y="1.5" width="19" height="15" rx="1" fill="#f4f4f4" stroke="#888" stroke-width="1"/>
<rect x="5" y="3" width="15" height="12" fill="#000"/>
<text x="6" y="9" font-family="Liberation Sans" font-size="7" font-weight="bold" fill="#e03010">X</text>
<text x="5.5" y="14" font-family="Liberation Sans" font-size="4.5" font-weight="bold" fill="#40c0f0">T<tspan fill="#f040a0">E</tspan><tspan fill="#a0e030">R</tspan><tspan fill="#30a0f0">M</tspan></text>
<path d="M3 18.5 H23 L20.5 23.5 H1 Z" fill="#f4f4f4" stroke="#888" stroke-width="0.9"/>
</svg><svg class="a" style="left:187px;top:406px" width="26" height="25" viewBox="0 0 26 25">
<rect x="3.5" y="1.5" width="19" height="15" rx="1" fill="#f4f4f4" stroke="#888" stroke-width="1"/>
<rect x="5" y="3" width="15" height="12" fill="#000"/>
<text x="6" y="9" font-family="Liberation Sans" font-size="7" font-weight="bold" fill="#e03010">X</text>
<text x="5.5" y="14" font-family="Liberation Sans" font-size="4.5" font-weight="bold" fill="#40c0f0">T<tspan fill="#f040a0">E</tspan><tspan fill="#a0e030">R</tspan><tspan fill="#30a0f0">M</tspan></text>
<path d="M3 18.5 H23 L20.5 23.5 H1 Z" fill="#f4f4f4" stroke="#888" stroke-width="0.9"/>
</svg><svg class="a" style="left:188px;top:443px" width="24" height="10" viewBox="0 0 24 10">
<g fill="none" stroke="#26305e" stroke-width="1.8"><path d="M6.5 2.8 Q2 1.5 2 5 Q2 8.5 6.5 7.2"/><path d="M15.5 8.5 V4.5 Q15.5 2.2 18 2.2"/><path d="M18.8 5.2 H22.8 Q22.8 2 20.8 2 Q18.5 2 18.5 5 Q18.5 8 21.3 8 L22.8 7.5"/></g>
<circle cx="10.8" cy="5" r="3.1" fill="none" stroke="#707078" stroke-width="2"/><circle cx="10.8" cy="5" r="1.2" fill="#c8c8c8"/>
</svg>
<!-- aterm -->
<svg class="a" style="left:189px;top:466px" width="22" height="20" viewBox="0 0 22 20">
<defs><radialGradient id="at" cx="0.4" cy="0.3" r="0.8"><stop offset="0" stop-color="#909890"/><stop offset="1" stop-color="#303430"/></radialGradient></defs>
<rect x="0.5" y="0.5" width="21" height="18.5" rx="1.5" fill="#5a5a52" stroke="#3a3a36"/>
<rect x="2.5" y="2.5" width="17" height="13" rx="2" fill="url(#at)"/>
<path d="M5 10 L7 11.5 L5 13" stroke="#fff" stroke-width="1" fill="none"/><rect x="8" y="12.5" width="4" height="1" fill="#fff"/>
</svg>

<div class="t" style="left:217px;top:123px;color:#000">Caja</div>
<div class="t" style="left:217px;top:152px;color:#000">Control Panel</div>
<div class="t" style="left:217px;top:181px;color:#000">Exit</div>
<div class="t" style="left:217px;top:210px;color:#000">MATE Terminal</div>
<div class="t" style="left:217px;top:239px;color:#000">MountTool</div>
<div class="t" style="left:217px;top:268px;color:#fff">Sce-import</div>
<div class="t" style="left:217px;top:297px;color:#000">Services</div>
<div class="t" style="left:217px;top:326px;color:#000">Set Time</div>
<div class="t" style="left:217px;top:355px;color:#000">Top</div>
<div class="t" style="left:217px;top:384px;color:#000">UXTerm</div>
<div class="t" style="left:217px;top:413px;color:#000">XTerm</div>
<div class="t" style="left:217px;top:442px;color:#000">Xkill</div>
<div class="t" style="left:217px;top:471px;color:#000">aterm</div>

</body></html>
